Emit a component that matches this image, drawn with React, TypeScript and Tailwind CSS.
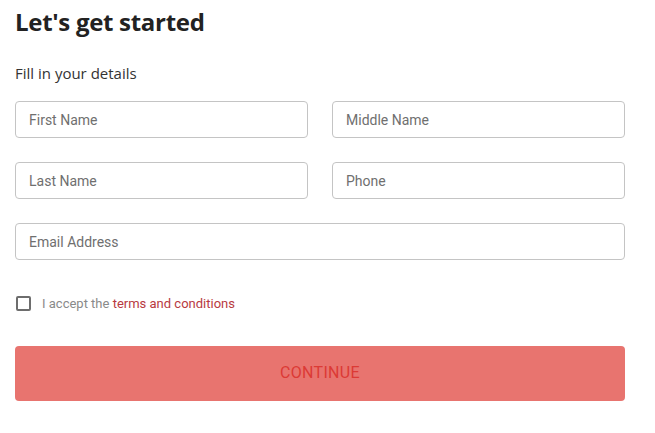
import React from 'react';

const Field = ({ placeholder }: { placeholder: string }) => (
  <input
    type="text"
    placeholder={placeholder}
    className="h-[37px] w-full rounded-[4px] border border-[#c4c4c4] bg-white px-[13px] font-['Roboto',sans-serif] text-[14px] text-[#333] outline-none placeholder:text-[#6f6f6f]"
  />
);

const App = () => {
  return (
    <div className="min-h-screen bg-white px-[15px] pt-[6px] pr-[30px]">
      <h1 className="font-['Open_Sans',sans-serif] text-[24px] font-bold leading-[32px] tracking-[-0.3px] text-[#222]">
        Let's get started
      </h1>
      <p className="mt-[25px] font-['Open_Sans',sans-serif] text-[15px] leading-[20px] text-[#333]">
        Fill in your details
      </p>

      <form className="mt-[18px]">
        <div className="grid grid-cols-2 gap-x-[24px] gap-y-[24px]">
          <Field placeholder="First Name" />
          <Field placeholder="Middle Name" />
          <Field placeholder="Last Name" />
          <Field placeholder="Phone" />
          <div className="col-span-2">
            <Field placeholder="Email Address" />
          </div>
        </div>

        <label className="mt-[34px] flex items-center gap-[11px] font-['Roboto',sans-serif] text-[13px] text-[#8a8a8a]">
          <span className="ml-px h-[15px] w-[15px] rounded-[2px] border-2 border-[#6d6d6d]" />
          <span>
            I accept the <span className="text-[#b83a3f]">terms and conditions</span>
          </span>
        </label>

        <button
          type="button"
          className="mt-[32px] h-[55px] w-full rounded-[4px] bg-[#e8746f] font-['Roboto',sans-serif] text-[16px] font-normal tracking-[0.3px] text-[#dc3a35]"
        >
          CONTINUE
        </button>
      </form>
    </div>
  );
};

export default App;
